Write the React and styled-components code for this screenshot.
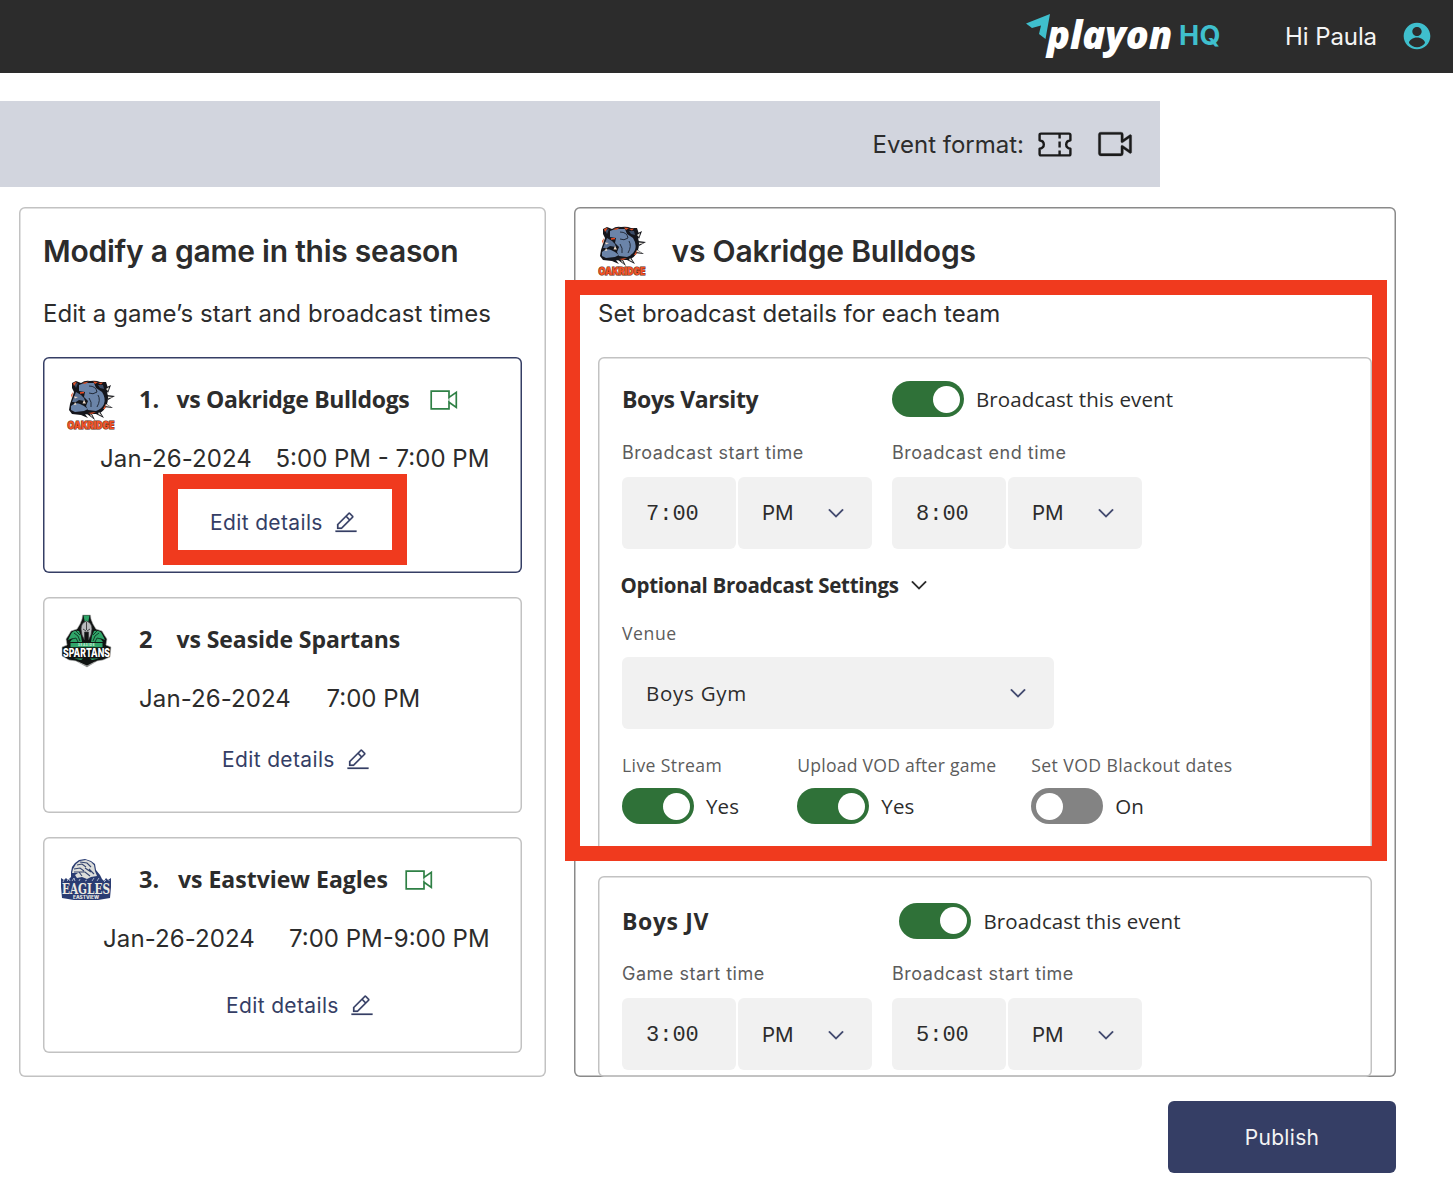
import React from "react";
import styled, { createGlobalStyle } from "styled-components";

const ui = '"Inter", "Liberation Sans", sans-serif';
const plex = '"Open Sans", "Noto Sans", sans-serif';
const mono = '"Liberation Mono", monospace';
const ink = "#2c2c2c";
const navy = "#353e65";
const green = "#2f7138";
const red = "#f03a1e";

const GlobalStyle = createGlobalStyle`
  * { box-sizing: border-box; }
  body { margin: 0; background: #fff; color: ${ink}; font-family: ${ui}; }
`;

const Page = styled.div`
  width: 1453px;
  height: 1194px;
  overflow: hidden;
  background: #fff;
`;

const Text = styled.span`
  display: block;
  flex: none;
  white-space: pre;
  font-family: ${(p) => p.$family || ui};
  font-size: ${(p) => p.$size}px;
  font-weight: ${(p) => p.$weight || 400};
  letter-spacing: ${(p) => p.$track || 0}px;
  color: ${(p) => p.$color || ink};
`;
const MonoText = styled(Text)`
  padding-top: 3px;
`;

const Header = styled.header`
  display: flex;
  align-items: center;
  justify-content: flex-end;
  height: 73px;
  padding-right: 20px;
  background: ${ink};
`;
const Brand = styled.div`
  display: flex;
  align-items: center;
  width: 196px;
  height: 73px;
  margin-right: 63px;
`;
const BrandArrow = styled.svg`
  width: 24px;
  height: 25px;
  margin: 0 -3px 20px 0;
  flex: none;
`;
const BrandName = styled.span`
  width: 133px;
  flex: none;
  margin-top: -6px;
  font: italic 800 38px/46px "Open Sans", sans-serif;
  letter-spacing: -0.1px;
  color: #fff;
`;
const BrandSuffix = styled.span`
  flex: none;
  margin-top: -1px;
  font: 700 27px/34px ${ui};
  letter-spacing: 0.3px;
  margin-left: -1px;
  color: #3fbfcd;
`;
const UserIcon = styled.svg`
  width: 32px;
  height: 32px;
  margin: 0 0 2px 24px;
  fill: #3fbfcd;
`;

const FormatBar = styled.div`
  display: flex;
  align-items: center;
  justify-content: flex-end;
  width: 1160px;
  height: 86px;
  margin-top: 28px;
  padding-right: 26px;
  background: #d2d5de;
`;

const Columns = styled.main`
  display: flex;
  gap: 28px;
  margin: 20px 0 0 19px;
`;
const Panel = styled.section`
  position: relative;
  width: ${(p) => p.$width}px;
  height: 870px;
  padding: 21.5px 24px 0;
  border-radius: 6px;
  box-shadow: inset 0 0 0 1.5px ${(p) => p.$edge};
`;
const PanelHeading = styled.div`
  display: flex;
  align-items: center;
  gap: 25.5px;
  height: 45px;
`;
const PanelHint = styled.div`
  height: 32px;
  margin: 24.5px 0 27px;
  line-height: 32px;
`;

const GameList = styled.div`
  display: grid;
  gap: 24px;
`;
const GameCard = styled.article`
  position: relative;
  height: 216px;
  width: 478.5px;
  border-radius: 6px;
  box-shadow: inset 0 0 0 1.5px ${(p) => (p.$active ? navy : "#c2c2c2")};
`;
const GameTitleRow = styled.div`
  display: grid;
  grid-template-columns: 96px ${(p) => p.$numberWidth}px ${(p) => p.$nameWidth}px auto;
  align-items: center;
  height: 84px;
`;
const LogoSlot = styled.div`
  padding: ${(p) => p.$drop}px 0 0 ${(p) => p.$indent}px;
  line-height: 0;
`;
const DateRow = styled.div`
  display: flex;
  align-items: center;
  height: 34px;
  padding-left: ${(p) => p.$indent}px;
`;
const DateCell = styled.div`
  width: ${(p) => p.$width}px;
`;
const EditLink = styled.a`
  display: flex;
  align-items: center;
  gap: 11px;
  height: 32px;
  margin-top: ${(p) => p.$drop}px;
  padding-left: ${(p) => p.$indent}px;
  line-height: 32px;
`;
const Highlight = styled.div`
  position: absolute;
  z-index: 2;
  left: ${(p) => p.$x}px;
  top: ${(p) => p.$y}px;
  width: ${(p) => p.$w}px;
  height: ${(p) => p.$h}px;
  border: 15px solid ${red};
  pointer-events: none;
`;

const TeamCard = styled.article`
  height: ${(p) => p.$height}px;
  width: 773.5px;
  margin-bottom: 24px;
  padding: ${(p) => p.$top}px 24px 0;
  border-radius: 6px;
  box-shadow: inset 0 0 0 1.5px #c2c2c2;
`;
const TeamHead = styled.div`
  display: grid;
  grid-template-columns: ${(p) => p.$first}px auto;
  align-items: center;
  height: 36px;
`;
const SwitchRow = styled.div`
  display: flex;
  align-items: center;
  gap: 12px;
  height: 36px;
`;
const Track = styled.span`
  display: flex;
  flex: none;
  justify-content: ${(p) => (p.$on ? "flex-end" : "flex-start")};
  width: 72px;
  height: 36px;
  padding: 4.5px;
  border-radius: 18px;
  background: ${(p) => (p.$on ? green : "#838383")};
`;
const Knob = styled.span`
  width: 27px;
  height: 27px;
  border-radius: 50%;
  background: #fff;
`;
const TimeFields = styled.div`
  display: grid;
  grid-template-columns: 270px 270px;
  margin-top: 22.5px;
`;
const FieldLabel = styled.div`
  height: 26px;
  margin-bottom: 11px;
  line-height: 26px;
`;
const InputPair = styled.div`
  display: flex;
  gap: 2px;
`;
const Field = styled.div`
  display: flex;
  align-items: center;
  justify-content: space-between;
  width: ${(p) => p.$width}px;
  height: 72px;
  padding: 0 24px;
  border-radius: 6px;
  background: #f1f1f1;
`;
const Disclosure = styled.div`
  display: flex;
  align-items: center;
  height: 32px;
  margin: 20px 0 19px -1.5px;
`;
const DisclosureLabel = styled.div`
  width: 286.5px;
`;
const OptionRow = styled.div`
  display: grid;
  grid-template-columns: 175.3px 234px auto;
  margin-top: 23.5px;
`;
const OptionLabel = styled.div`
  height: 26px;
  margin-bottom: 10px;
  line-height: 26px;
`;
const PublishButton = styled.button`
  display: block;
  width: 228px;
  height: 72px;
  margin: 24px 0 0 1168px;
  border: 0;
  border-radius: 6px;
  padding: 0;
  background: ${navy};
  text-align: center;
`;
const Glyph = styled.svg`
  flex: none;
  display: block;
  width: ${(p) => p.$w}px;
  height: ${(p) => p.$h || p.$w}px;
  margin-left: ${(p) => p.$ml || 0}px;
  margin-top: ${(p) => p.$mt || 0}px;
  fill: ${(p) => p.$color};
`;
const TeamLogo = styled.svg`
  display: block;
  flex: none;
  overflow: visible;
`;

const Chevron = ({ color = navy }) => (
  <Glyph $w={24} $color={color} $mt={1} viewBox="0 0 32 32">
    <path d="M16 22L6 12l1.4-1.4 8.6 8.6 8.6-8.6L26 12z" stroke={color} strokeWidth="0.4" />
  </Glyph>
);
const Pencil = () => (
  <Glyph $w={24} $color={navy} viewBox="0 0 32 32">
    <path d="M2 26h28v2H2zM25.4 9c.8-.8.8-2 0-2.8l-3.6-3.6c-.8-.8-2-.8-2.8 0l-15 15V24h6.4l15-15zm-5-5L24 7.6l-3 3L17.4 7l3-3zM6 22v-3.6l10-10 3.6 3.6-10 10H6z" stroke={navy} strokeWidth="0.3" />
  </Glyph>
);
const GreenVideo = () => (
  <Glyph $w={28} $h={20} $mt={2} $color="none" viewBox="0 0 28 20">
    <path d="M1.2 1.2H19V7.4L26.3 2.4V17.4L19 12.2V18.8H1.2Z" stroke="#2f8045" strokeWidth="1.7" />
    <path d="M19 7.4V12.2" stroke="#2f8045" strokeWidth="0.7" />
  </Glyph>
);
const BigVideo = () => (
  <Glyph $w={38} $color="#1b1b1b" $ml={24} viewBox="0 0 32 32">
    <path d="M21 26H4a2 2 0 01-2-2V8a2 2 0 012-2h17a2 2 0 012 2v4.06l5.42-3.87A1 1 0 0130 9v14a1 1 0 01-1.58.81L23 19.94V24a2 2 0 01-2 2zM4 8v16h17v-6a1 1 0 011.58-.81L28 21.06V10.94l-5.42 3.87A1 1 0 0121 14V8z" stroke="#1b1b1b" strokeWidth="0.25" />
  </Glyph>
);
const Ticket = () => (
  <Glyph $w={34} $h={25} $color="none" $ml={14} viewBox="0 0 34 25">
    <g stroke="#1b1b1b" strokeWidth="2.4" strokeLinejoin="round">
      <path d="M3 1.6H31Q32.4 1.6 32.4 3V8.2Q28.2 9 28.2 12.5T32.4 16.8V22Q32.4 23.4 31 23.4H3Q1.6 23.4 1.6 22V16.8Q5.8 16 5.8 12.5T1.6 8.2V3Q1.6 1.6 3 1.6Z" />
      <path d="M21.6 2V6.5M21.6 9.5V15.5M21.6 18.5V23" />
    </g>
  </Glyph>
);

const BulldogLogo = () => (
  <TeamLogo width="48" height="51" viewBox="0 0 48 51">
    <path d="M5 3L9 1L14 3Q18 0 23 1Q29 0 33 2L39 2L41 8L40 12Q42 18 40 24Q38 31 31 34L22 34L14 35L5 34L2 30L3 24L5 18L7 12L5 8Z" fill="#14151b" />
    <path d="M38 8L44 5L41 13ZM40 15L48 16L41 20ZM38 23L46 28L36 27ZM32 30L37 38L29 34ZM24 32L28 40L20 34ZM17 33L21 38L14 35Z" fill="#15161b" />
    <path d="M12 5Q16 3 20 3L27 3L29 8L35 12Q39 18 37 24Q35 29 29 31L21 30L19 26L21 21L17 17L18 12L12 11Z" fill="#6b84a9" />
    <path d="M9 12L14 15L17 18L18 21L12 20L9 22L5 22L7 17Z" fill="#5b7194" />
    <path d="M4 26Q8 22 13 24Q18 26 21 29L17 31L8 32L4 30Z" fill="#6b84a9" />
    <path d="M7 4L11 3L9 8ZM31 5L36 5L37 9L33 8Z" fill="#3c4c67" />
    <path d="M22 6Q29 6 30 12Q26 15 22 13M31 15Q34 20 30 27M22 18Q25 22 24 27" fill="none" stroke="#1b212e" strokeWidth="0.9" />
    <path d="M39 9L42 7L41 11ZM41 16.5L46 17L41 18.5ZM39 24L44 27L38 26ZM32 32L35 36L31 34ZM24 34L26 38L23 35Z" fill="#e8e4dc" />
    <path d="M6 3L10 1.500L7 6ZM31 3L36 2.500L34 4.500ZM15 3L22 1.500L18 4ZM26 1.500L31 2L28 4ZM36 29L39 24L38 29ZM21 33L29 32L25 34ZM4 15L6 12L5 18Z" fill="#e25228" />
    <path d="M13 13L17 12.500" stroke="#ee4b22" strokeWidth="1.300" />
    <path d="M7 16.500L11 17L8 18.500ZM17 20L19 23.500L15.500 23.500ZM7 25L8 22L9.500 24.500Z" fill="#efdccb" />
    <text x="24" y="48.5" textAnchor="middle" textLength="47" lengthAdjust="spacingAndGlyphs" fontFamily="Inter, sans-serif" fontWeight="900" fontSize="10" fill="#f05225" stroke="#5a1c0d" strokeWidth="1" paintOrder="stroke">OAKRIDGE</text>
  </TeamLogo>
);
const SpartanLogo = () => (
  <TeamLogo width="51" height="53" viewBox="0 0 51 53">
    <path d="M21.5 1L29.5 1L30 5L32 10L35 15L41 17L44 22L46 25L45 31L50 33L49 43L42 46L36 47L26 53L15 47L8 46L1 42L1 33L6 31L5 25L7 22L10 17L16 15L19 10L21 5Z" fill="#101312" stroke="#b9bcba" strokeWidth="0.6" />
    <path d="M22.5 1.5L28.5 1.5L27.3 8H23.800ZM18 17Q12 16 10 20L7 26L12 24L9 28H21L20 22ZM33 17Q39 16 41 20L44 26L39 24L42 28H30L31 22Z" fill="#2fa568" />
    <path d="M13 19L17 22L19 27M38 19L34 22L32 27M11 25L15 24L17 28M40 25L36 24L34 28M15 17L19 21M36 17L32 21" stroke="#123d28" fill="none" />
    <path d="M25.5 7Q31 9 31 15L30 21L27.5 26V18H23.500V26L21 21L20 15Q20 9 25.5 7Z" fill="#b9bbbd" stroke="#343738" strokeWidth="0.7" />
    <path d="M22 15L25 17M29 15L26 17M25.5 8V16" stroke="#343738" strokeWidth="0.9" />
    <rect x="9.5" y="29" width="32" height="4.2" fill="#32a56a" />
    <text x="25.5" y="32.3" textAnchor="middle" fontFamily="Inter, sans-serif" fontWeight="800" fontSize="3.2" letterSpacing="0.5" fill="#c8f0d9">SEASIDE</text>
    <text x="25.5" y="42.8" textAnchor="middle" textLength="47" lengthAdjust="spacingAndGlyphs" fontFamily="Inter, sans-serif" fontWeight="800" fontSize="11.5" fill="#fff">SPARTANS</text>
    <path d="M13 44.5H22L20 46ZM38 44.5H29L31 46Z" fill="#32a56a" />
    <path d="M17 48L26 52L34 48" fill="none" stroke="#c6c8c7" strokeWidth="0.8" />
  </TeamLogo>
);
const EagleLogo = () => (
  <TeamLogo width="52" height="42" viewBox="0 0 52 42">
    <path d="M11 13L12 8L15 4L19 1L25 0L31 2L35 5L36 11L40 16L42 20L44 22L46 19L48 21L51 19L51 28L50 39L38 41H14L2 39L1 28L1 19L4 21L6 19L8 21L11 18Z" fill="#2a3c72" />
    <path d="M13 10L16 5L20 2L26 1L31 3L34 6L35 12L37 17L31 18L27 20L22 18L17 19L15 16L18 14L12 14Z" fill="#dcddda" />
    <path d="M17 6L22 5L26 8M20 3L27 4L31 8M14 10L20 9L24 12M25 9L31 13M19 13L25 13L30 17M14 13H19L22 17M29 10L34 15" fill="none" stroke="#34446f" strokeWidth="1.1" />
    <path d="M3 23L4 21M7 22L9 20L10 22M12 22L14 19L15 22M19 22L20 20M25 22L27 21M32 22L34 19M37 22L39 19M44 23L46 21M49 22V21" stroke="#b4bdd3" strokeWidth="0.9" fill="none" />
    <text x="26" y="35.2" textAnchor="middle" textLength="48" lengthAdjust="spacingAndGlyphs" fontFamily="DejaVu Serif, serif" fontWeight="700" fontSize="15" fill="#eceae2">EAGLES</text>
    <text x="26" y="40.3" textAnchor="middle" textLength="26" lengthAdjust="spacingAndGlyphs" fontFamily="Inter, sans-serif" fontWeight="800" fontSize="4.2" fill="#eceae2">EASTVIEW</text>
  </TeamLogo>
);

const games = [
  { no: "1.", name: "vs Oakridge Bulldogs", track: -0.32, Logo: BulldogLogo, logo: [23.5, 12], cols: [37.5, 253], video: true, date: "Jan-26-2024", time: "5:00 PM - 7:00 PM", dates: [57, 175.5], edit: [31.5, 167], active: true },
  { no: "2", name: "vs Seaside Spartans", track: -0.08, Logo: SpartanLogo, logo: [18, 2], cols: [37.5, 240], date: "Jan-26-2024", time: "7:00 PM", dates: [96, 187.5], edit: [28.5, 179] },
  { no: "3.", name: "vs Eastview Eagles", track: 0, Logo: EagleLogo, logo: [17, 1], cols: [39, 226.5], video: true, date: "Jan-26-2024", time: "7:00 PM-9:00 PM", dates: [60, 186], edit: [34.5, 183] },
];

const Game = ({ g }) => (
  <GameCard $active={g.active}>
    <GameTitleRow $numberWidth={g.cols[0]} $nameWidth={g.cols[1]}>
      <LogoSlot $indent={g.logo[0]} $drop={g.logo[1]}><g.Logo /></LogoSlot>
      <Text $family={plex} $size={23.5} $weight={700}>{g.no}</Text>
      <Text $family={plex} $size={23} $weight={700} $track={g.track}>{g.name}</Text>
      {g.video && <GreenVideo />}
    </GameTitleRow>
    <DateRow $indent={g.dates[0]}>
      <DateCell $width={g.dates[1]}><Text $size={24} $track={0.1}>{g.date}</Text></DateCell>
      <Text $size={24}>{g.time}</Text>
    </DateRow>
    <EditLink $drop={g.edit[0]} $indent={g.edit[1]}>
      <Text $size={21} $track={0.36} $color={navy}>Edit details</Text>
      <Pencil />
    </EditLink>
    {g.active && <Highlight $x={120.4} $y={117.4} $w={244} $h={91} />}
  </GameCard>
);

const Toggle = ({ on, label }) => (
  <SwitchRow>
    <Track $on={on}><Knob /></Track>
    <Text $family={plex} $size={20.5} $track={0.12}>{label}</Text>
  </SwitchRow>
);
const Label = ({ children, track = 0.38 }) => (
  <Text $family={plex} $size={17.6} $track={track} $color="#5c5c5c">{children}</Text>
);
const TimeField = ({ label, time }) => (
  <div>
    <FieldLabel><Text $size={18} $track={0.52} $color="#5c5c5c">{label}</Text></FieldLabel>
    <InputPair>
      <Field $width={114}><MonoText $family={mono} $size={22}>{time}</MonoText></Field>
      <Field $width={134.4}><Text $size={20.5}>PM</Text><Chevron /></Field>
    </InputPair>
  </div>
);

export default function App() {
  return (
    <Page>
      <GlobalStyle />
      <Header>
        <Brand>
          <BrandArrow viewBox="0 0 24 25">
            <path d="M0 9.5L24 0L19.5 25L13 20L15 11.5L6 14Z" fill="#3fbfcd" />
          </BrandArrow>
          <BrandName>playon</BrandName>
          <BrandSuffix>HQ</BrandSuffix>
        </Brand>
        <Text $size={24} $track={-0.1} $color="#f4f4f4">Hi Paula</Text>
        <UserIcon viewBox="0 0 24 24">
          <path d="M12 2C6.48 2 2 6.48 2 12s4.48 10 10 10 10-4.48 10-10S17.52 2 12 2zm0 3.2c1.9 0 3.5 1.5 3.5 3.4s-1.6 3.4-3.5 3.4-3.5-1.5-3.5-3.4 1.6-3.4 3.5-3.4zm0 15.2c-2.5 0-4.710-1.280-6-3.220.030-1.990 3-4 6-4 3 0 5.970 2.010 6 4-1.290 1.940-3.500 3.220-6 3.220z" />
        </UserIcon>
      </Header>
      <FormatBar>
        <Text $size={24}>Event format:</Text>
        <Ticket />
        <BigVideo />
      </FormatBar>
      <Columns>
        <Panel $width={527} $edge="#c2c2c2">
          <PanelHeading><Text $size={30} $weight={600} $track={-0.24}>Modify a game in this season</Text></PanelHeading>
          <PanelHint><Text $size={24} $track={0.06}>Edit a game’s start and broadcast times</Text></PanelHint>
          <GameList>{games.map((g) => <Game key={g.no} g={g} />)}</GameList>
        </Panel>
        <Panel $width={822} $edge="#8a8a8a">
          <PanelHeading>
            <BulldogLogo />
            <Text $size={30} $weight={600} $track={-0.18}>vs Oakridge Bulldogs</Text>
          </PanelHeading>
          <PanelHint><Text $size={24} $track={-0.02}>Set broadcast details for each team</Text></PanelHint>
          <TeamCard $height={495} $top={24}>
            <TeamHead $first={270}>
              <Text $family={plex} $size={23} $weight={700} $track={-0.4}>Boys Varsity</Text>
              <Toggle on label="Broadcast this event" />
            </TeamHead>
            <TimeFields>
              <TimeField label="Broadcast start time" time="7:00" />
              <TimeField label="Broadcast end time" time="8:00" />
            </TimeFields>
            <Disclosure>
              <DisclosureLabel><Text $family={plex} $size={20.5} $weight={700} $track={-0.28}>Optional Broadcast Settings</Text></DisclosureLabel>
              <Chevron color="#1b1b1b" />
            </Disclosure>
            <FieldLabel><Label track={0.6}>Venue</Label></FieldLabel>
            <Field $width={432}><Text $family={plex} $size={20.5} $track={0.75}>Boys Gym</Text><Chevron /></Field>
            <OptionRow>
              <div><OptionLabel><Label>Live Stream</Label></OptionLabel><Toggle on label="Yes" /></div>
              <div><OptionLabel><Label track={0.22}>Upload VOD after game</Label></OptionLabel><Toggle on label="Yes" /></div>
              <div><OptionLabel><Label track={0.4}>Set VOD Blackout dates</Label></OptionLabel><Toggle label="On" /></div>
            </OptionRow>
          </TeamCard>
          <TeamCard $height={201} $top={26.5}>
            <TeamHead $first={277.4}>
              <Text $family={plex} $size={23} $weight={700} $track={0.6}>Boys JV</Text>
              <Toggle on label="Broadcast this event" />
            </TeamHead>
            <TimeFields>
              <TimeField label="Game start time" time="3:00" />
              <TimeField label="Broadcast start time" time="5:00" />
            </TimeFields>
          </TeamCard>
          <Highlight $x={-8.6} $y={73.4} $w={822} $h={580.5} />
        </Panel>
      </Columns>
      <PublishButton><Text $size={21} $track={0.3} $color="#f4f4f4">Publish</Text></PublishButton>
    </Page>
  );
}
